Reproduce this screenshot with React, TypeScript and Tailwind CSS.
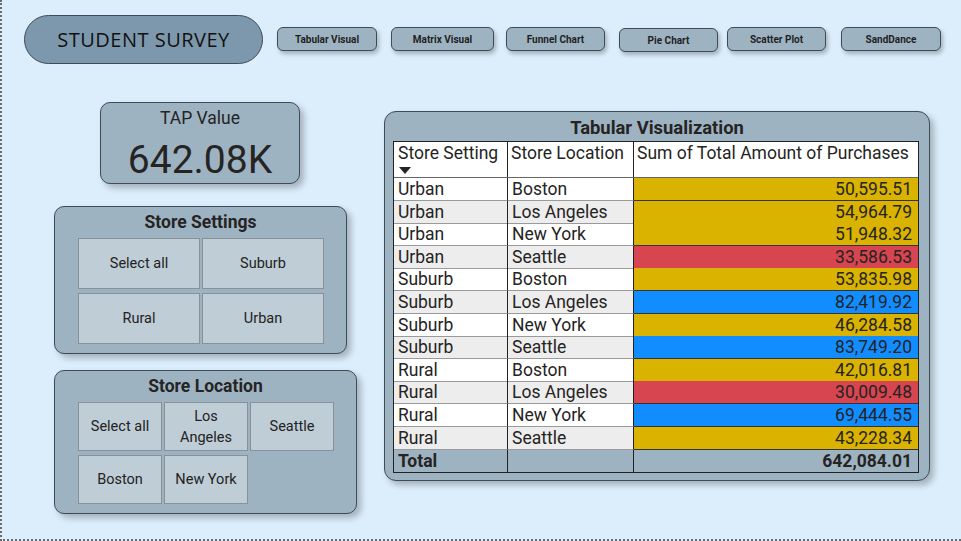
import React from "react";

const rows: [string, string, string, string][] = [
  ["Urban", "Boston", "50,595.51", "y"],
  ["Urban", "Los Angeles", "54,964.79", "y"],
  ["Urban", "New York", "51,948.32", "y"],
  ["Urban", "Seattle", "33,586.53", "r"],
  ["Suburb", "Boston", "53,835.98", "y"],
  ["Suburb", "Los Angeles", "82,419.92", "b"],
  ["Suburb", "New York", "46,284.58", "y"],
  ["Suburb", "Seattle", "83,749.20", "b"],
  ["Rural", "Boston", "42,016.81", "y"],
  ["Rural", "Los Angeles", "30,009.48", "r"],
  ["Rural", "New York", "69,444.55", "b"],
  ["Rural", "Seattle", "43,228.34", "y"],
];

const font = { fontFamily: "Roboto, 'Liberation Sans', sans-serif" };

function NavBtn({ label, cls }: { label: string; cls: string }) {
  return (
    <div
      className={`h-[24px] rounded-[6px] border border-[#3e4c57] bg-[#9eb3c2] shadow-[2px_3px_4px_rgba(0,0,0,0.25)] flex items-center justify-center text-[10px] font-bold text-[#1f1f1f] ${cls}`}
    >
      {label}
    </div>
  );
}

function Tile({ children, cls }: { children: React.ReactNode; cls: string }) {
  return (
    <div
      className={`border border-[#8b9096] bg-[#bfcdd7] flex items-center justify-center text-center text-[14.5px] leading-[21px] text-[#222] ${cls}`}
    >
      {children}
    </div>
  );
}

export default function App() {
  const valBg: Record<string, string> = {
    y: "bg-[#d9b300]",
    r: "bg-[#d64550]",
    b: "bg-[#118dff]",
  };
  return (
    <div
      className="w-[961px] h-[541px] bg-[#dcedfb] border-l-2 border-b-2 border-dotted border-[#6b6b6b] overflow-hidden"
      style={font}
    >
      {/* header */}
      <div className="flex items-start h-[64px] pt-[15px] pl-[22px]">
        <div
          className="w-[239px] h-[49px] rounded-full border border-[#3e4c57] bg-[#7d98ad] flex items-center justify-center text-[20px] text-[#111] tracking-[0.5px]"
          style={{ fontFamily: "'Open Sans', 'Noto Sans', sans-serif" }}
        >
          STUDENT SURVEY
        </div>
        <NavBtn label="Tabular Visual" cls="w-[100px] ml-[14px] mt-[12px]" />
        <NavBtn label="Matrix Visual" cls="w-[103px] ml-[14px] mt-[12px]" />
        <NavBtn label="Funnel Chart" cls="w-[99px] ml-[12px] mt-[12px]" />
        <NavBtn label="Pie Chart" cls="w-[99px] ml-[14px] mt-[13px]" />
        <NavBtn label="Scatter Plot" cls="w-[99px] ml-[9px] mt-[12px]" />
        <NavBtn label="SandDance" cls="w-[100px] ml-[15px] mt-[12px]" />
      </div>

      {/* main */}
      <div className="flex items-start">
        {/* left column */}
        <div className="flex flex-col ml-[52px] w-[303px]">
          <div className="ml-[46px] mt-[38px] w-[200px] h-[82px] rounded-[10px] border border-[#3e4c57] bg-[#9eb3c2] shadow-[4px_4px_6px_rgba(0,0,0,0.25)] flex flex-col items-center text-[#252423]">
            <div className="text-[17.5px] leading-[20px] mt-[5px]">TAP Value</div>
            <div className="text-[39px] leading-[46px] mt-[9px]">642.08K</div>
          </div>

          <div className="mt-[22px] w-[293px] h-[148px] rounded-[10px] border border-[#3e4c57] bg-[#9eb3c2] shadow-[4px_4px_6px_rgba(0,0,0,0.25)] flex flex-col">
            <div className="text-center text-[17.5px] font-bold leading-[20px] mt-[5px] text-[#252423]">
              Store Settings
            </div>
            <div className="grid grid-cols-[122px_122px] gap-x-[2px] gap-y-[4px] ml-[23px] mt-[6px]">
              <Tile cls="h-[51px]">Select all</Tile>
              <Tile cls="h-[51px]">Suburb</Tile>
              <Tile cls="h-[51px]">Rural</Tile>
              <Tile cls="h-[51px]">Urban</Tile>
            </div>
          </div>

          <div className="mt-[16px] w-[303px] h-[144px] rounded-[10px] border border-[#3e4c57] bg-[#9eb3c2] shadow-[4px_4px_6px_rgba(0,0,0,0.25)] flex flex-col">
            <div className="text-center text-[17.5px] font-bold leading-[20px] mt-[5px] text-[#252423]">
              Store Location
            </div>
            <div className="grid grid-cols-[84px_84px_84px] gap-x-[2px] gap-y-[4px] ml-[23px] mt-[6px]">
              <Tile cls="h-[49px]">Select all</Tile>
              <Tile cls="h-[49px]">
                Los
                <br />
                Angeles
              </Tile>
              <Tile cls="h-[49px]">Seattle</Tile>
              <Tile cls="h-[49px]">Boston</Tile>
              <Tile cls="h-[49px]">New York</Tile>
            </div>
          </div>
        </div>

        {/* table card */}
        <div className="ml-[27px] mt-[47px] w-[546px] h-[370px] rounded-[12px] border border-[#3e4c57] bg-[#9eb3c2] shadow-[4px_4px_6px_rgba(0,0,0,0.25)] flex flex-col">
          <div className="text-center text-[18.4px] font-bold leading-[22px] mt-[5px] text-[#252423]">
            Tabular Visualization
          </div>
          <div className="ml-[8px] mt-[2px] w-[526px] border border-[#222] text-[17.5px] text-[#252423]">
            {/* header */}
            <div className="grid grid-cols-[114px_126px_1fr] h-[36px] bg-white border-b border-[#666]">
              <div className="border-r border-[#222] pl-[4px] leading-[22px] relative whitespace-nowrap">
                Store Setting
                <svg className="absolute left-[5px] top-[25px]" width="12" height="7" viewBox="0 0 12 7">
                  <path d="M0 0 L12 0 L6 7 Z" fill="#252423" />
                </svg>
              </div>
              <div className="border-r border-[#222] pl-[3px] leading-[22px] whitespace-nowrap">Store Location</div>
              <div className="pl-[3px] leading-[22px] whitespace-nowrap">Sum of Total Amount of Purchases</div>
            </div>
            {rows.map((r, i) => (
              <div
                key={i}
                className={`grid grid-cols-[114px_126px_1fr] h-[22.6px] ${i % 2 === 0 ? "bg-white" : "bg-[#ededed]"}`}
              >
                <div className="border-r border-[#222] border-b border-b-[#9a9a9a] pl-[4px] leading-[22px]">{r[0]}</div>
                <div className="border-r border-[#222] border-b border-b-[#9a9a9a] pl-[4px] leading-[22px]">{r[1]}</div>
                <div className={`${valBg[r[3]]} border-b border-b-[#333] text-right pr-[6px] leading-[22px]`}>
                  {r[2]}
                </div>
              </div>
            ))}
            <div className="grid grid-cols-[114px_126px_1fr] h-[23px] bg-[#9eb3c2] border-t border-[#777]">
              <div className="border-r border-[#222] pl-[4px] font-bold leading-[22px]">Total</div>
              <div className="border-r border-[#222]"></div>
              <div className="text-right pr-[6px] font-bold leading-[22px]">642,084.01</div>
            </div>
          </div>
        </div>
      </div>
    </div>
  );
}
